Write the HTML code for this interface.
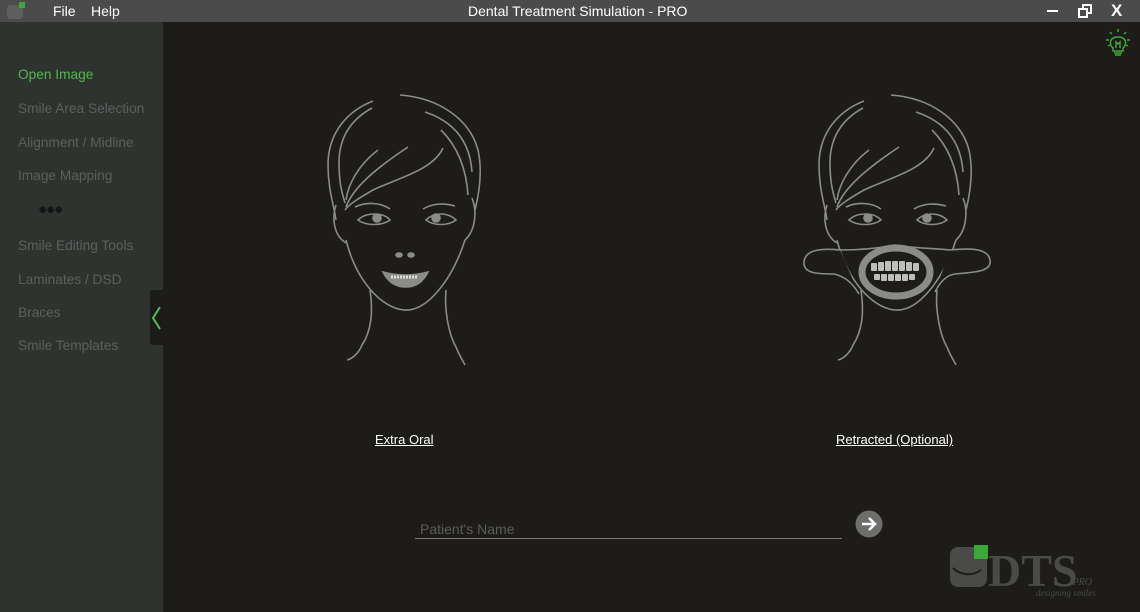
<!DOCTYPE html>
<html><head><style>
body{margin:0;width:1140px;height:612px;overflow:hidden;background:#1d1c19;font-family:"Liberation Sans",sans-serif;position:relative}
.tb{position:absolute;left:0;top:0;width:1140px;height:22px;background:#4b4b4b;color:#fff;font-size:14px}
.tb span{position:absolute;top:3px}
.side{position:absolute;left:0;top:22px;width:163px;height:590px;background:#2f3330}
.side div{position:absolute;left:18px;font-size:13.7px;color:#5c605d}
.txt{position:absolute;color:#fff;font-size:13px;text-decoration:underline}
</style></head><body>
<div class="tb">
<svg style="position:absolute;left:6px;top:2px" width="20" height="18"><rect x="1" y="3" width="16" height="14" rx="4" fill="#5e5e5e"/><rect x="13" y="0" width="6" height="6" fill="#3daa3a"/></svg>
<span style="left:53px">File</span><span style="left:91px">Help</span>
<span style="left:468px">Dental Treatment Simulation - PRO</span>
<span style="left:1047px;top:10px;width:11px;height:2px;background:#fff"></span>
<svg style="position:absolute;left:1078px;top:4px" width="14" height="14" fill="none" stroke="#fff" stroke-width="2"><rect x="1" y="5" width="8" height="8"/><path d="M5 5V1h8v8H9"/></svg>
<span style="left:1111px;top:1px;font-size:17px;font-weight:bold">X</span>
</div>
<div class="side">
<div style="top:45px;color:#4fb84a">Open Image</div>
<div style="top:79px">Smile Area Selection</div>
<div style="top:113px">Alignment / Midline</div>
<div style="top:146px">Image Mapping</div>
<div style="top:179px;left:38px;font-size:15px;color:#151515;letter-spacing:-1px">●●●</div>
<div style="top:216px">Smile Editing Tools</div>
<div style="top:250px">Laminates / DSD</div>
<div style="top:283px">Braces</div>
<div style="top:316px">Smile Templates</div>
</div>
<div style="position:absolute;left:150px;top:290px;width:13px;height:55px;background:#1b1c1a;border-radius:3px 0 0 3px"></div>
<svg style="position:absolute;left:150px;top:305px" width="13" height="26"><path d="M10 2L3 13l7 11" stroke="#4fc04a" stroke-width="2" fill="none"/></svg>
<svg style="position:absolute;left:1104px;top:28px" width="28" height="30" fill="none" stroke="#3da63a" stroke-width="1.5"><path d="M9 20c-4-3-4-11 5-11s9 8 5 11v3H9z"/><path d="M10 25h8M11 27h6M14 1v3M6 4l2 2M22 4l-2 2M2 12h3M23 12h3M4 18l2-1M24 18l-2-1M12 20v-6l2 2 2-2v6"/></svg>
<svg style="position:absolute;left:0;top:0" width="1140" height="612" fill="none" stroke="#8b8b89" stroke-width="1.6">
<defs><g id="f">
<path d="M373 101C345 112 328 135 328 165c0 25 6 40 8 55"/>
<path d="M400 95c40 3 70 25 78 55 4 18 2 40 -3 60"/>
<path d="M372 108c-22 12-33 30-33 55 0 20 3 30 6 40"/>
<path d="M425 112c30 10 45 30 47 60"/>
<path d="M441 130c15 15 25 35 27 65"/>
<path d="M378 150c-20 15-30 35-32 50"/>
<path d="M408 147c-30 20-55 40-62 60"/>
<path d="M443 148c-10 22-45 30-70 42-12 7-24 14-28 20"/>
<path d="M336 205c-4 12-3 30 10 38"/><path d="M472 198c5 12 4 32-7 42"/>
<path d="M346 240c10 40 35 68 58 70s48-30 61-70"/>
<path d="M370 290c3 20 2 40-8 55-3 8-10 14-15 15"/>
<path d="M446 290c-2 20 3 45 10 57 3 8 7 14 9 18"/>
<path d="M355 207c10-5 25-5 35 2M423 209c10-6 22-6 32-3"/>
<path d="M358 220c8-8 25-8 32 0-8 6-24 6-32 0zM426 220c8-8 22-8 30 0-8 6-22 6-30 0z" />
<circle cx="377" cy="218" r="4" fill="#8b8b89"/><circle cx="436" cy="218" r="4" fill="#8b8b89"/>
<ellipse cx="399" cy="255" rx="3" ry="2" fill="#8b8b89"/><ellipse cx="411" cy="255" rx="3" ry="2" fill="#8b8b89"/>
</g></defs>
<use href="#f"/>
<path d="M383 272c15 4 30 4 45 0-5 10-12 15-22 15s-18-5-23-15z" fill="#8b8b89"/>
<path d="M391 277h26" stroke="#ddd" stroke-width="3" stroke-dasharray="2 1"/>
<use href="#f" x="491" y="0"/>
<path d="M840 250c-20-2-35 0-36 12s15 12 30 12c10 2 18 8 25 20M950 250c20-2 38-2 40 10s-15 12-35 14c-8 1-15 8-20 18" fill="#1d1c19"/>
<path d="M840 250c20 0 40-2 55-5 15 3 35 3 55 5"/>
<ellipse cx="896" cy="272" rx="34" ry="24" stroke-width="7" fill="#1d1c19"/>
<path d="M871 263h50M871 272h50" stroke="#1d1c19" stroke-width="1"/>
<g fill="#bdbdbb" stroke="none">
<rect x="871" y="263" width="6" height="8" rx="1"/><rect x="878" y="262" width="6" height="9" rx="1"/><rect x="885" y="261" width="6" height="10" rx="1"/><rect x="892" y="261" width="6" height="10" rx="1"/><rect x="899" y="261" width="6" height="10" rx="1"/><rect x="906" y="262" width="6" height="9" rx="1"/><rect x="913" y="263" width="6" height="8" rx="1"/>
<rect x="874" y="274" width="6" height="6" rx="1"/><rect x="881" y="274" width="6" height="7" rx="1"/><rect x="888" y="274" width="6" height="7" rx="1"/><rect x="895" y="274" width="6" height="7" rx="1"/><rect x="902" y="274" width="6" height="7" rx="1"/><rect x="909" y="274" width="6" height="6" rx="1"/>
</g>
</svg>
<div class="txt" style="left:375px;top:432px">Extra Oral</div>
<div class="txt" style="left:836px;top:432px">Retracted (Optional)</div>
<div style="position:absolute;left:420px;top:521px;color:#5c5c5a;font-size:14px">Patient's Name</div>
<div style="position:absolute;left:415px;top:538px;width:427px;height:1px;background:#7a7a78"></div>
<svg style="position:absolute;left:855px;top:510px" width="28" height="28"><circle cx="14" cy="14" r="13.5" fill="#6e6e6c"/><path d="M7 14h13M14 8l6 6-6 6" stroke="#fff" stroke-width="2.5" fill="none"/></svg>
<svg style="position:absolute;left:948px;top:543px" width="150" height="56"><rect x="2" y="4" width="37" height="40" rx="8" fill="#4a4a48"/><rect x="26" y="2" width="14" height="14" fill="#3da63a"/><path d="M5 25c8 8 20 8 28 2" stroke="#1d1c19" stroke-width="2" fill="none"/><text x="40" y="43" font-family="Liberation Serif" font-weight="bold" font-size="46" fill="#4a4a48">DTS</text><text x="144" y="42" font-size="10" font-style="italic" font-family="Liberation Serif" fill="#4a4a48" text-anchor="end">PRO</text><text x="88" y="53" font-size="9" font-style="italic" font-family="Liberation Serif" fill="#4a4a48">designing smiles</text></svg>
</body></html>
